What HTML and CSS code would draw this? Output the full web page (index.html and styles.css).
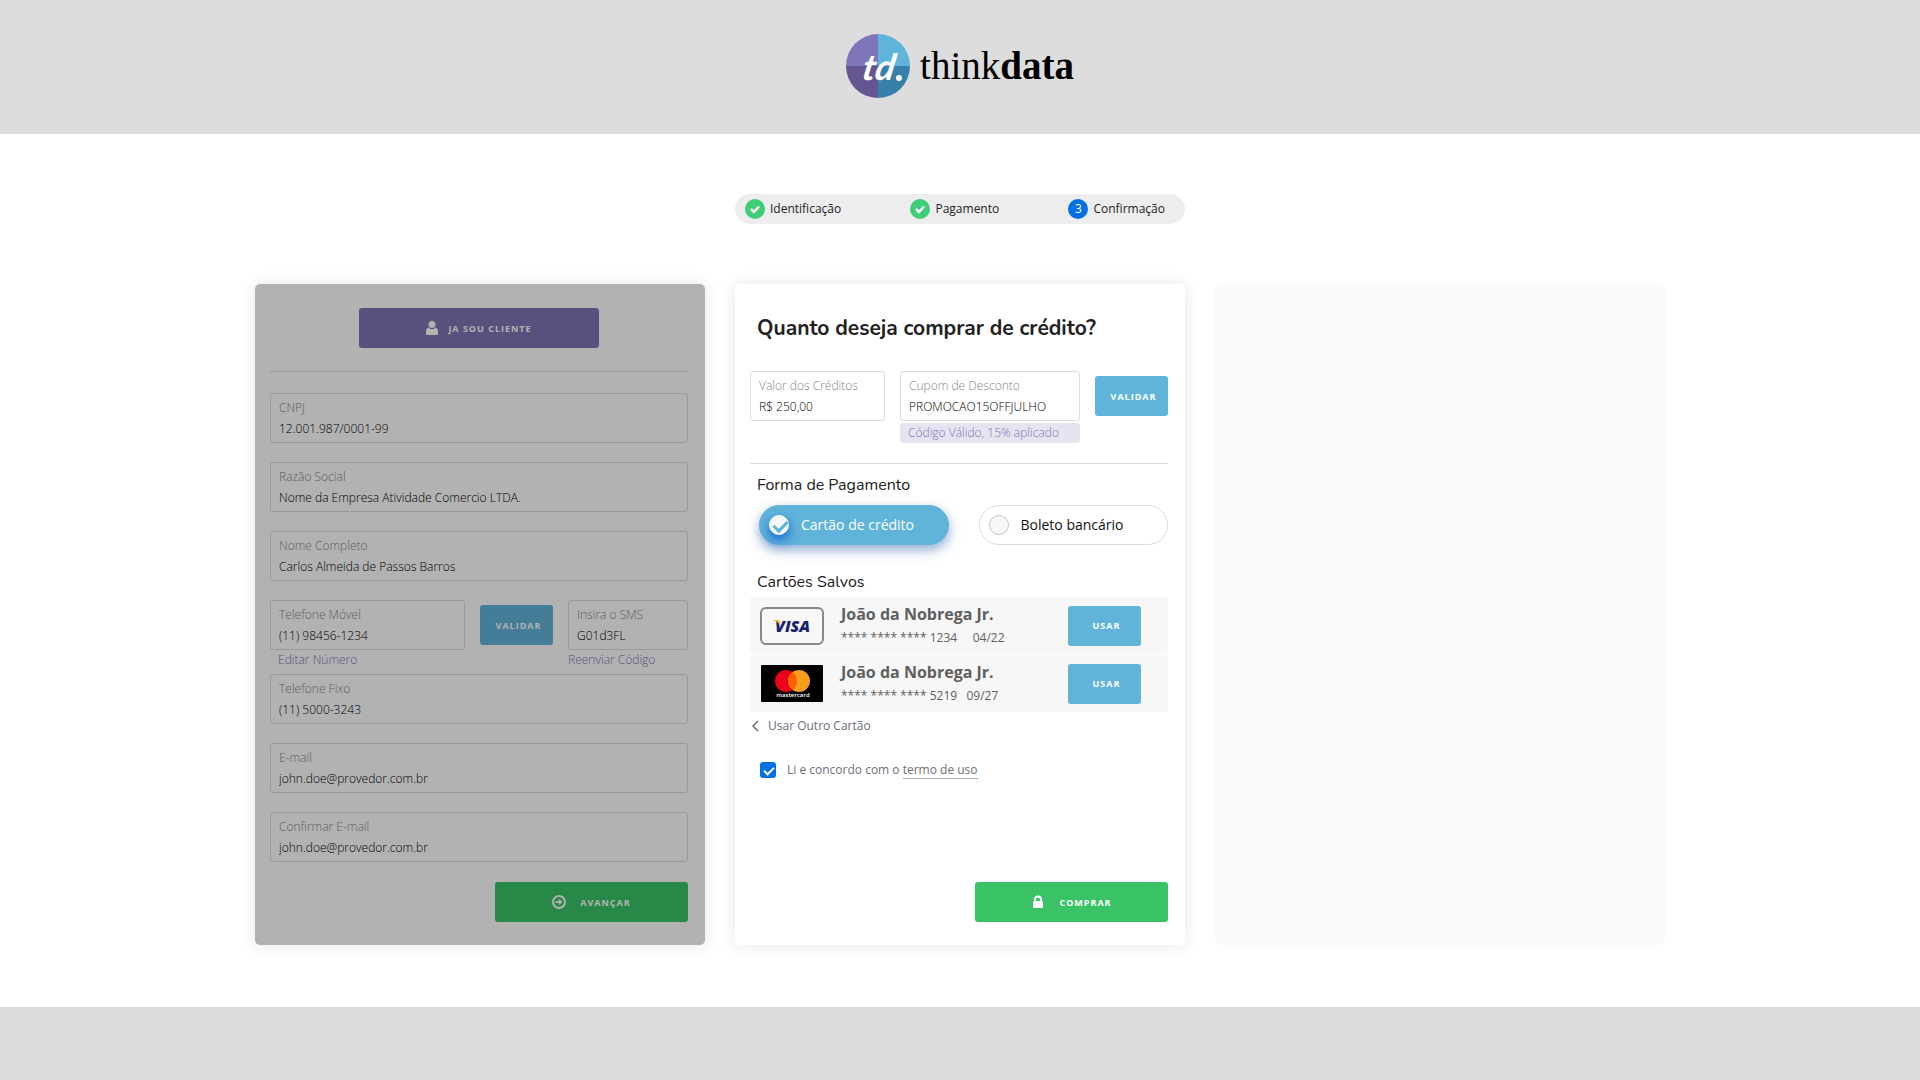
FILE: index.html
```html
<!DOCTYPE html>
<html lang="pt-BR">
<head>
    <meta charset="UTF-8">
    <meta name="viewport" content="width=device-width, initial-scale=1.0">
    <title>thinkdata - Confirmação</title>
    <link rel="stylesheet" href="styles.css">
</head>
<body>
    <header class="header">
        <a href="#" class="logo">
            <svg class="logo-mark" width="64" height="64" viewBox="0 0 64 64" role="img" aria-label="td.">
                <path d="M32 32V0A32 32 0 0 0 0 32z" fill="#7f76b9"/>
                <path d="M32 32V0a32 32 0 0 1 32 32z" fill="#5fb4db"/>
                <path d="M32 32H0a32 32 0 0 0 32 32z" fill="#675592"/>
                <path d="M32 32h32a32 32 0 0 1-32 32z" fill="#3780a9"/>
                <text class="logo-td" x="15" y="46" transform="skewX(-10) translate(8 0)">td</text>
                <circle cx="53" cy="44" r="3" fill="#fff"/>
            </svg>
            <span class="logo-name">think<b>data</b></span>
        </a>
    </header>

    <main class="main">
        <ol class="steps">
            <li class="step">
                <svg width="20" height="20" viewBox="0 0 20 20"><circle cx="10" cy="10" r="10" fill="#3fcd77"/><path d="M6 10l3 3 5-5.500" fill="none" stroke="#fff" stroke-width="2.500"/></svg>
                <span>Identificação</span>
            </li>
            <li class="step">
                <svg width="20" height="20" viewBox="0 0 20 20"><circle cx="10" cy="10" r="10" fill="#3fcd77"/><path d="M6 10l3 3 5-5.500" fill="none" stroke="#fff" stroke-width="2.500"/></svg>
                <span>Pagamento</span>
            </li>
            <li class="step">
                <span class="step-number">3</span>
                <span>Confirmação</span>
            </li>
        </ol>

        <div class="cards">
            <form class="card card-disabled">
                <button type="button" class="btn btn-purple btn-client">
                    <svg width="12" height="14" viewBox="0 0 12 14" fill="#fff"><circle cx="6" cy="3.500" r="3.500"/><path d="M2.500 6.500C.8 7 0 8.500 0 11v1.500C0 13.500.6 14 1.500 14h9c.9 0 1.500-.5 1.500-1.500V11c0-2.500-.8-4-2.500-4.500C8.600 7.500 7.400 8 6 8S3.400 7.500 2.500 6.500z"/></svg>
                    <span>JA SOU CLIENTE</span>
                </button>
                <hr>
                <div class="fields">
                    <div class="field">
                        <label for="cnpj">CNPJ</label>
                        <input type="text" id="cnpj" value="12.001.987/0001-99">
                    </div>
                    <div class="field">
                        <label for="razao">Razão Social</label>
                        <input type="text" id="razao" value="Nome da Empresa Atividade Comercio LTDA.">
                    </div>
                    <div class="field">
                        <label for="nome">Nome Completo</label>
                        <input type="text" id="nome" value="Carlos Almeida de Passos Barros">
                    </div>
                    <div class="phone-group">
                        <div class="phone-row">
                            <div class="phone-cell">
                                <div class="field">
                                    <label for="movel">Telefone Móvel</label>
                                    <input type="text" id="movel" value="(11) 98456-1234">
                                </div>
                                <a href="#" class="hint">Editar Número</a>
                            </div>
                            <button type="button" class="btn btn-blue btn-small">VALIDAR</button>
                            <div class="sms-cell">
                                <div class="field">
                                    <label for="sms">Insira o SMS</label>
                                    <input type="text" id="sms" value="G01d3FL">
                                </div>
                                <a href="#" class="hint hint-flush">Reenviar Código</a>
                            </div>
                        </div>
                        <div class="field">
                            <label for="fixo">Telefone Fixo</label>
                            <input type="text" id="fixo" value="(11) 5000-3243">
                        </div>
                    </div>
                    <div class="field">
                        <label for="email">E-mail</label>
                        <input type="text" id="email" value="john.doe@provedor.com.br">
                    </div>
                    <div class="field">
                        <label for="email2">Confirmar E-mail</label>
                        <input type="text" id="email2" value="john.doe@provedor.com.br">
                    </div>
                </div>
                <button type="button" class="btn btn-green btn-submit">
                    <svg width="14" height="14" viewBox="0 0 14 14" fill="none" stroke="#fff" stroke-width="2"><circle cx="7" cy="7" r="6"/><path d="M3.500 7h5"/><path d="M7 3.700L10.500 7 7 10.300z" fill="#fff" stroke="none"/></svg>
                    <span>AVANÇAR</span>
                </button>
            </form>

            <form class="card">
                <h1>Quanto deseja comprar de crédito?</h1>
                <div class="credit-row">
                    <div class="field field-value">
                        <label for="valor">Valor dos Créditos</label>
                        <input type="text" id="valor" value="R$ 250,00">
                    </div>
                    <div class="coupon">
                        <div class="field">
                            <label for="cupom">Cupom de Desconto</label>
                            <input type="text" id="cupom" value="PROMOCAO15OFFJULHO">
                        </div>
                        <p class="coupon-ok">Código Válido, 15% aplicado</p>
                    </div>
                    <button type="button" class="btn btn-blue btn-small">VALIDAR</button>
                </div>
                <hr>
                <h2>Forma de Pagamento</h2>
                <div class="methods">
                    <label class="method method-active">
                        <input type="radio" name="method" checked>
                        <span>Cartão de crédito</span>
                    </label>
                    <label class="method">
                        <input type="radio" name="method">
                        <span>Boleto bancário</span>
                    </label>
                </div>
                <h2>Cartões Salvos</h2>
                <ul class="saved">
                    <li class="saved-card">
                        <svg width="64" height="38" viewBox="0 0 64 38" role="img" aria-label="Visa">
                            <rect x="1" y="1" width="62" height="36" rx="5" fill="#f7f7f7" stroke="#888" stroke-width="2"/>
                            <text class="visa" x="15" y="25">VISA</text>
                            <path d="M13 13h4.500c1 0 1.500.5 1.700 1.500l1 4.500c-1.300-3-3.700-5-7.200-6z" fill="#f9b517"/>
                        </svg>
                        <div class="saved-info">
                            <strong>João da Nobrega Jr.</strong>
                            <span>**** **** **** 1234     04/22</span>
                        </div>
                        <button type="button" class="btn btn-blue btn-small">USAR</button>
                    </li>
                    <li class="saved-card">
                        <svg width="64" height="38" viewBox="0 0 64 38" role="img" aria-label="Mastercard">
                            <rect x="1" width="62" height="37" rx="1"/>
                            <circle cx="26" cy="16" r="11" fill="#eb001b"/>
                            <circle cx="39" cy="16" r="11" fill="#f79e1b"/>
                            <path d="M32.500 7.100a11 11 0 0 1 0 17.800 11 11 0 0 1 0-17.800z" fill="#ff5f00"/>
                            <text class="mastercard" x="33" y="32" text-anchor="middle">mastercard</text>
                        </svg>
                        <div class="saved-info">
                            <strong>João da Nobrega Jr.</strong>
                            <span>**** **** **** 5219   09/27</span>
                        </div>
                        <button type="button" class="btn btn-blue btn-small">USAR</button>
                    </li>
                </ul>
                <a href="#" class="other-card">
                    <svg width="8" height="12" viewBox="0 0 8 12" fill="none" stroke="#6b6c7e" stroke-width="1.500"><path d="M7 1L2 6l5 5"/></svg>
                    <span>Usar Outro Cartão</span>
                </a>
                <div class="terms">
                    <input type="checkbox" id="terms" checked>
                    <label for="terms">Li e concordo com o <a href="#">termo de uso</a></label>
                </div>
                <button type="button" class="btn btn-green btn-submit">
                    <svg width="14" height="14" viewBox="0 0 14 14"><rect x="2" y="6" width="10" height="7" rx="1" fill="#fff"/><path d="M4 7V4.500a3 3 0 0 1 6 0V7" fill="none" stroke="#fff" stroke-width="2"/></svg>
                    <span>COMPRAR</span>
                </button>
            </form>

            <section class="card card-empty"></section>
        </div>
    </main>

    <footer class="footer"></footer>
</body>
</html>
```
FILE: styles.css
```css
* {
    box-sizing: border-box;
}

body {
    margin: 0;
    min-height: 100vh;
    display: flex;
    flex-direction: column;
    font-family: "Open Sans", sans-serif;
    font-size: 12px;
    line-height: 20px;
    color: #222;
    background: #fff;
}

button, input {
    font-family: inherit;
}

/* header / footer */
.header {
    display: flex;
    justify-content: center;
    padding: 34px 20px 36px;
    background: #ddd;
}

.footer {
    flex: 1;
    min-height: 73px;
    background: #ddd;
}

.logo {
    display: flex;
    align-items: center;
    gap: 10px;
    color: #000;
    text-decoration: none;
}

.logo-td {
    font-family: Lato, sans-serif;
    font-size: 36px;
    font-style: italic;
    font-weight: 700;
    fill: #fff;
}

.logo-name {
    font-family: "Liberation Serif", serif;
    font-size: 39px;
    line-height: 64px;
}

.main {
    width: 100%;
    max-width: 1450px;
    margin: 0 auto;
    padding: 60px 20px 62px;
}

/* steps */
.steps {
    display: flex;
    align-items: center;
    justify-content: space-between;
    max-width: 450px;
    height: 30px;
    margin: 0 auto 60px;
    padding: 0 20px 0 10px;
    list-style: none;
    border-radius: 15px;
    background: #ededed;
}

.step {
    display: flex;
    align-items: center;
    gap: 5px;
}

.step-number {
    width: 20px;
    height: 20px;
    border-radius: 50%;
    background: #0070e4;
    color: #fff;
    text-align: center;
}

/* cards */
.cards {
    display: grid;
    grid-template-columns: repeat(3, 1fr);
    gap: 30px;
}

.card {
    position: relative;
    display: flex;
    flex-direction: column;
    padding: 24px 17px 23px 15px;
    border-radius: 5px;
    background: #fff;
    box-shadow: 0 0 16px rgba(0, 0, 0, 0.1);
}

.card-disabled::after {
    content: "";
    position: absolute;
    inset: 0;
    border-radius: 5px;
    background: rgba(0, 0, 0, 0.3);
}

.card-empty {
    background: #fafafa;
    box-shadow: none;
}

hr {
    width: 100%;
    margin: 23px 0 21px;
    border: 0;
    border-top: 1px solid #dcdcdc;
}

h1 {
    margin: 5px 7px 28px;
    font-family: Nunito, Lato, sans-serif;
    font-size: 21px;
    line-height: 30px;
    font-weight: 700;
}

h2 {
    margin: 0 7px;
    font-family: Nunito, Lato, sans-serif;
    font-size: 16px;
    line-height: 20px;
    font-weight: 400;
}

/* buttons */
.btn {
    display: flex;
    align-items: center;
    justify-content: center;
    height: 40px;
    padding: 0;
    border: 0;
    border-radius: 3px;
    color: #fff;
    font-size: 9px;
    font-weight: 700;
    letter-spacing: 1px;
    cursor: pointer;
}

.btn-purple {
    background: #7f75b5;
}

.btn-blue {
    background: #60b4da;
}

.btn-green {
    background: #39c366;
}

.btn-client {
    gap: 10px;
    width: 240px;
    align-self: center;
}

.btn-small {
    flex: none;
    width: 73px;
    padding-left: 4px;
}

.btn-submit {
    gap: 14px;
    width: 193px;
    margin-top: auto;
    align-self: flex-end;
}

/* fields */
.fields {
    display: flex;
    flex-direction: column;
    gap: 19px;
    margin-bottom: 20px;
}

.field {
    padding: 4px 8px;
    border: 1px solid #dcdcdc;
    border-radius: 3px;
}

.field label {
    display: block;
    color: #84858f;
    font-weight: 300;
}

.field input {
    display: block;
    width: 100%;
    height: 20px;
    padding: 0;
    border: 0;
    outline: none;
    background: none;
    color: #000;
    font-size: 12px;
    font-weight: 300;
}

.phone-row {
    display: flex;
    gap: 15px;
}

.phone-row .btn {
    margin-top: 5px;
}

.phone-cell {
    flex: 1;
}

.sms-cell {
    width: 120px;
}

.hint {
    display: block;
    padding: 0 8px 4px;
    color: #7f75b5;
    font-weight: 300;
    text-decoration: none;
}

.hint-flush {
    padding-left: 0;
}

/* credit */
.credit-row {
    display: flex;
    align-items: flex-start;
    gap: 15px;
}

.credit-row .btn {
    margin-top: 5px;
}

.field-value {
    flex: 1;
}

.coupon {
    width: 180px;
}

.coupon-ok {
    margin: 2px 0 0;
    padding: 0 8px;
    border-radius: 3px;
    background: #e5e4f0;
    color: #7f75b5;
    font-weight: 300;
}

.credit-row + hr {
    margin: 20px 0 11px;
}

.methods {
    display: flex;
    justify-content: space-between;
    gap: 30px;
    margin: 10px 0 27px 9px;
}

.method {
    display: flex;
    flex: 1;
    align-items: center;
    gap: 12px;
    height: 40px;
    padding: 0 9px;
    border: 1px solid #dcdcdc;
    border-radius: 20px;
    color: #111;
    font-size: 14px;
    cursor: pointer;
}

.method-active {
    border-color: #60b4da;
    background: #60b4da;
    color: #fff;
    box-shadow: 0 5px 12px rgba(30, 90, 170, 0.5);
}

.method input {
    appearance: none;
    position: relative;
    width: 20px;
    height: 20px;
    margin: 0;
    border: 1px solid #c4c4c4;
    border-radius: 50%;
    background: #f7f7f7;
}

.method input:checked {
    border-color: #f7f7f7;
    box-shadow: 0 5px 12px #0d5fd0;
}

.method input:checked::after {
    content: "";
    position: absolute;
    left: 6px;
    top: 2px;
    width: 6px;
    height: 11px;
    border: solid #60b4da;
    border-width: 0 3px 3px 0;
    transform: rotate(45deg);
}

/* saved cards */
.saved {
    margin: 5px 0 0;
    padding: 0;
    list-style: none;
}

.saved-card {
    display: flex;
    align-items: center;
    height: 57px;
    margin-bottom: 1px;
    padding: 0 27px 0 10px;
    border-radius: 3px;
    background: #f7f7f7;
}

.saved-info {
    display: flex;
    flex: 1;
    flex-direction: column;
    gap: 4px;
    margin-left: 17px;
    color: #5f5f5f;
    white-space: pre;
}

.saved-info strong {
    font-size: 16px;
}

.visa {
    font-size: 16px;
    font-style: italic;
    font-weight: 800;
    fill: #1a1f71;
}

.mastercard {
    font-size: 6px;
    font-weight: 600;
    fill: #fff;
}

.other-card {
    display: flex;
    align-items: center;
    align-self: flex-start;
    gap: 9px;
    margin: 3px 1px 24px;
    color: #6b6c7e;
    text-decoration: none;
}

.terms {
    display: flex;
    align-items: center;
    gap: 11px;
    padding-left: 10px;
    color: #6f7078;
}

.terms a {
    color: inherit;
    border-bottom: 1px solid #a9aab2;
    line-height: 16px;
    text-decoration: none;
}

.terms input {
    appearance: none;
    position: relative;
    width: 16px;
    height: 16px;
    margin: 0;
    border-radius: 3px;
    background: #0070e4;
}

.terms input:checked::after {
    content: "";
    position: absolute;
    left: 6px;
    top: 3px;
    width: 4px;
    height: 8px;
    border: solid #fff;
    border-width: 0 2px 2px 0;
    transform: rotate(45deg);
}

@media screen and (max-width: 1100px) {
    .cards {
        grid-template-columns: 1fr;
        max-width: 450px;
        margin: 0 auto;
    }
}
```
